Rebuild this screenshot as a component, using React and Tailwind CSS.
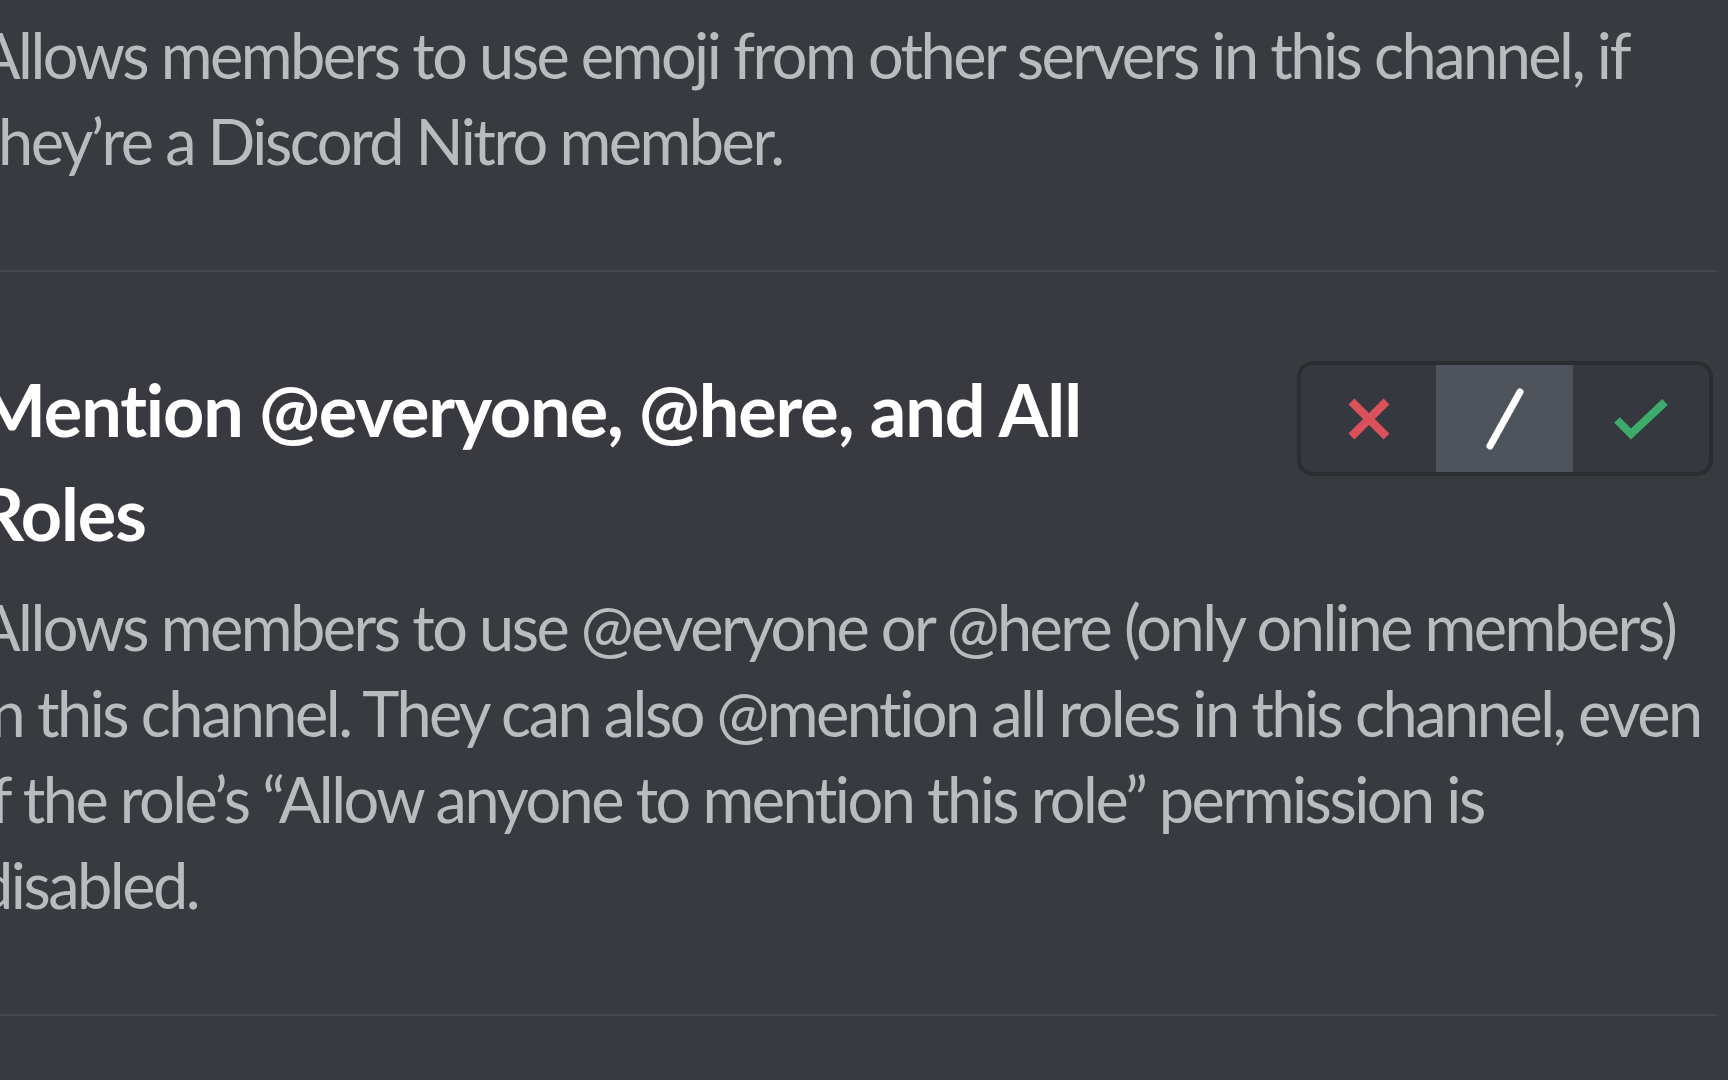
import React from "react";

const Toggle = () => {
  return (
    <div className="flex h-[115px] shrink-0 overflow-hidden rounded-[16px] border-[4px] border-[#2b2d31] bg-[#35383e]">
      <button className="flex w-[135px] items-center justify-center">
        <svg width="50" height="50" viewBox="0 0 24 24" fill="none">
          <path d="M5 5L19 19M19 5L5 19" stroke="#d9515a" strokeWidth="4" strokeLinecap="square" />
        </svg>
      </button>
      <button className="flex w-[137px] items-center justify-center bg-[#4f535b]">
        <svg width="44" height="62" viewBox="0 0 44 62" fill="none">
          <path d="M37 4L7 58" stroke="#ffffff" strokeWidth="7" strokeLinecap="round" />
        </svg>
      </button>
      <button className="flex w-[136px] items-center justify-center">
        <svg width="56" height="42" viewBox="0 0 56 42" fill="none">
          <path d="M4 22L18 36L52 4" stroke="#3dab6a" strokeWidth="8" strokeLinejoin="miter" />
        </svg>
      </button>
    </div>
  );
};

export default function App() {
  return (
    <div className="h-[1080px] w-[1728px] overflow-hidden bg-[#383a40] font-['Lato','Noto_Sans',sans-serif]">
      <div className="ml-[-22px] w-[1738px] pt-[12px]">
        <p className="whitespace-nowrap text-[63px] leading-[86px] tracking-[-2.5px] text-[#b9bbbe]">
          Allows members to use emoji from other servers in this channel, if
          <br />
          they’re a Discord Nitro member.
        </p>

        <div className="mt-[86px] h-[2px] w-[1738px] bg-[#45484e]" />

        <div className="mt-[85px] flex items-start justify-between">
          <h2 className="whitespace-nowrap text-[72px] font-bold leading-[104px] tracking-[-1.1px] text-white">
            Mention @everyone, @here, and All
            <br />
            Roles
          </h2>
          <div className="mt-[4px] mr-[3px]">
            <Toggle />
          </div>
        </div>

        <p className="mt-[19px] whitespace-nowrap text-[63px] leading-[86px] tracking-[-2.5px] text-[#b9bbbe]">
          Allows members to use @everyone or @here (only online members)
          <br />
          in this channel. They can also @mention all roles in this channel, even
          <br />
          if the role’s “Allow anyone to mention this role” permission is
          <br />
          disabled.
        </p>

        <div className="mt-[86px] h-[2px] w-[1738px] bg-[#45484e]" />
      </div>
    </div>
  );
}
